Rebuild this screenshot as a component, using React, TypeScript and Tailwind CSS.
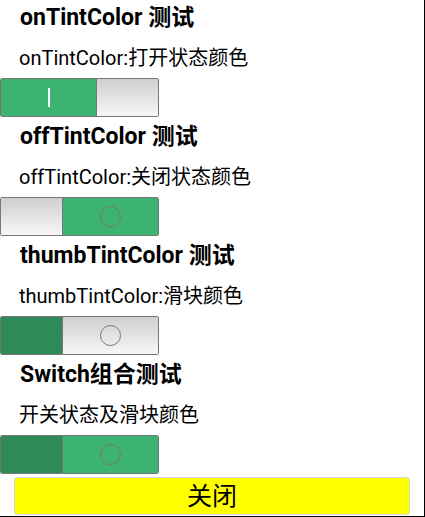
import React from 'react';

const GREEN = 'bg-[#3cb371]';
const DARK = 'bg-[#2e8b57]';
const GRAY = 'bg-gradient-to-b from-[#cfcfcf] to-[#f7f7f7]';

function Circle() {
  return <div className="h-[21px] w-[21px] rounded-full border border-[#777]" />;
}

function Switch({ on, thumb, track }: { on: boolean; thumb: string; track: string }) {
  const thumbEl = <div className={`h-full w-[62px] ${thumb} ${on ? 'border-l' : 'border-r'} border-[#777]`} />;
  return (
    <div className="flex h-[39px] w-[159px] overflow-hidden rounded-[2px] border border-[#777]">
      {on ? (
        <>
          <div className={`flex flex-1 items-center justify-center ${track}`}>
            <div className="h-[19px] w-[2px] bg-white" />
          </div>
          {thumbEl}
        </>
      ) : (
        <>
          {thumbEl}
          <div className={`flex flex-1 items-center justify-center ${track}`}>
            <Circle />
          </div>
        </>
      )}
    </div>
  );
}

function Section({ title, desc, children }: { title: string; desc: string; children: React.ReactNode }) {
  return (
    <section className="flex h-[119px] flex-col">
      <h2 className="pl-[20px] pt-[3px] text-[23px] font-bold leading-[30px]">{title}</h2>
      <p className="pl-[19px] pt-[13px] text-[20px] leading-[24px]">{desc}</p>
      <div className="pt-[8px]">{children}</div>
    </section>
  );
}

export default function App() {
  return (
    <div
      className="h-[517px] w-[425px] border-r border-b border-black bg-white text-black"
      style={{ fontFamily: 'Roboto, "Noto Sans CJK SC", sans-serif' }}
    >
      <Section title="onTintColor 测试" desc="onTintColor:打开状态颜色">
        <Switch on thumb={GRAY} track={GREEN} />
      </Section>
      <Section title="offTintColor 测试" desc="offTintColor:关闭状态颜色">
        <Switch on={false} thumb={GRAY} track={GREEN} />
      </Section>
      <Section title="thumbTintColor 测试" desc="thumbTintColor:滑块颜色">
        <Switch on={false} thumb={DARK} track={GRAY} />
      </Section>
      <Section title="Switch组合测试" desc="开关状态及滑块颜色">
        <Switch on={false} thumb={DARK} track={GREEN} />
      </Section>
      <div className="px-[14px] pt-[1px]">
        <button className="flex h-[38px] w-full items-center justify-center rounded-[3px] border border-[#d6d6d6] bg-[#ffff00] text-[25px] leading-none">
          关闭
        </button>
      </div>
    </div>
  );
}
